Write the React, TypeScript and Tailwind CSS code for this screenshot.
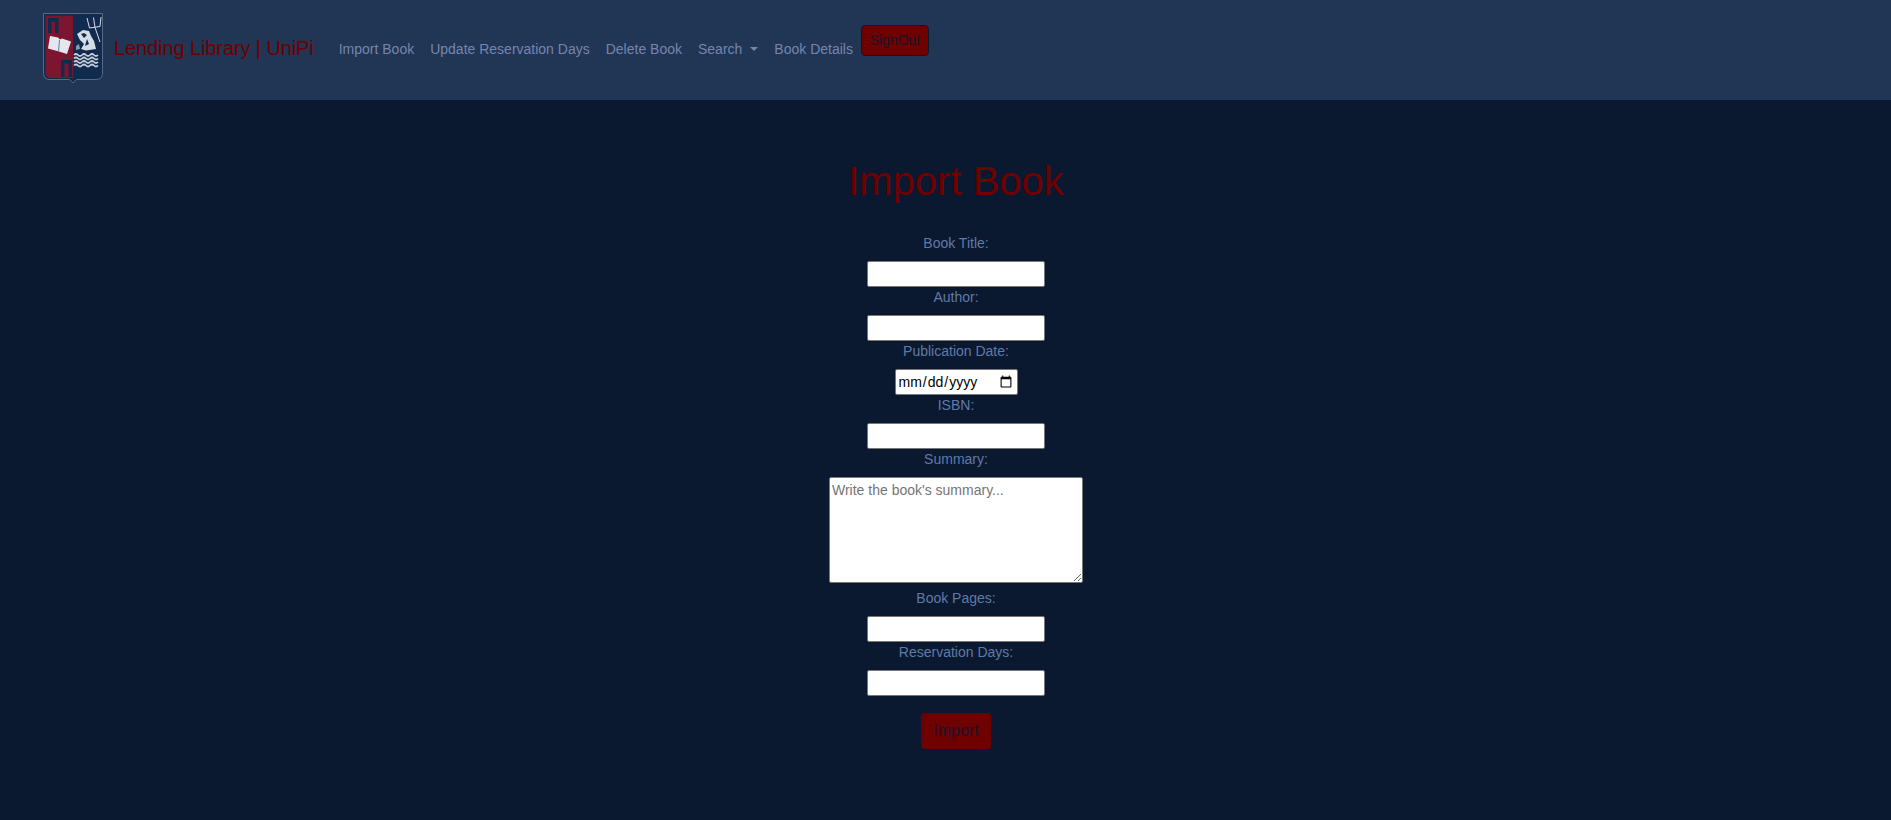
import type { ReactNode } from 'react';

const font = "font-['Liberation_Sans',Arial,sans-serif]";

function Logo() {
  return (
    <svg viewBox="0 0 60 70" className="mb-[4px] h-[70px] w-[60px] shrink-0">
      {/* shield */}
      <path d="M0.5 0.5H59.5V60Q59.5 66.5 53 66.5H33.5L30 70L26.5 66.5H7Q0.5 66.5 0.5 60Z" fill="#112b4e" stroke="#56698a" strokeWidth="1" />
      <path d="M2.5 2.5H30V65H8Q2.5 65 2.5 59Z" fill="#7d1530" />
      {/* pi letters */}
      <path d="M5 5H15.5V20H12V8.5H8.5V20H5Z" fill="#112b4e" />
      <path d="M18 47H29V64H25.5V50.5H21.5V64H18Z" fill="#112b4e" />
      {/* book */}
      <path d="M7 23L15 24.5L17 26.5L19 25.5L28 28.5L24 41L16 38.5L5 35.5Z" fill="#e4e8ee" />
      <path d="M16.5 27L15.5 38.5" stroke="#6a7a92" strokeWidth="1" />
      {/* trident */}
      <path d="M44 5L46.5 15L57 13.5L58 4M50.5 4.5L52 14.5L57 29" fill="none" stroke="#d5dce6" strokeWidth="1" />
      {/* head */}
      <path d="M34 21L40 17L46 18L48 23L51 28L53 36L43 37.5L38 36L41 31L37 27Z" fill="#d5dce6" />
      <path d="M38 21L41 20L44 22L41 25ZM44 26L46 31L42 33Z" fill="#112b4e" />
      <path d="M33 33L36 31L37 36L33 37Z" fill="#8a98ad" />
      {/* waves */}
      <path d="M31 42q2-2 4 0t4 0t4 0t4 0t4 0t4 0M31 45.5q2-2 4 0t4 0t4 0t4 0t4 0t4 0M31 49q2-2 4 0t4 0t4 0t4 0t4 0t4 0M31 52.5q2-2 4 0t4 0t4 0t4 0t4 0t4 0" fill="none" stroke="#c4cdd9" strokeWidth="1.7" />
    </svg>
  );
}

function NavLink({ children }: { children: ReactNode }) {
  return (
    <a href="#" className="mb-[2px] px-2 text-[14px] leading-[21px] text-[#7585ad]">
      {children}
    </a>
  );
}

function Field({ label, children }: { label: string; children: ReactNode }) {
  return (
    <div className="flex flex-col items-center">
      <label className="mb-[7px] text-[14px] leading-[21px] text-[#607aa8]">{label}</label>
      {children}
    </div>
  );
}

const inputClass = 'block h-[26px] w-[178px] rounded-[2px] border border-[#767676] bg-white px-[2px] text-[14px] text-black';

export default function App() {
  return (
    <div className={`${font} flex min-h-[820px] flex-col bg-[#0a1930]`}>
      <nav className="flex h-[100px] items-center bg-[#213555] pl-[43px]">
        <Logo />
        <a href="#" className="mb-[4px] ml-[11px] mr-[17px] text-[20px] leading-[30px] tracking-[-0.1px] text-[#6f0000]">
          Lending Library | UniPi
        </a>
        <NavLink>Import Book</NavLink>
        <NavLink>Update Reservation Days</NavLink>
        <NavLink>Delete Book</NavLink>
        <a href="#" className="mb-[2px] flex items-center px-2 text-[14px] leading-[21px] text-[#7585ad]">
          Search
          <span className="ml-[8px] h-0 w-0 border-x-[4px] border-t-[4px] border-x-transparent border-t-[#7585ad]" />
        </a>
        <NavLink>Book Details</NavLink>
        <button className="mb-[19px] h-[31px] w-[68px] rounded-[4px] border border-[#0a1930] bg-[#6f0000] text-[14px] text-[#1a1530]">
          SignOut
        </button>
      </nav>

      <main className="flex flex-col items-center pl-[21px] pt-[57px]">
        <h1 className="mb-[28px] text-[40px] leading-[48px] font-normal text-[#6f0000]">Import Book</h1>
        <form className="flex flex-col items-center">
          <Field label="Book Title:">
            <input type="text" className={inputClass} />
          </Field>
          <Field label="Author:">
            <input type="text" className={inputClass} />
          </Field>
          <Field label="Publication Date:">
            <input type="date" className="block h-[26px] w-[123px] rounded-[2px] border border-[#767676] bg-white px-[2px] text-[14px] text-black" />
          </Field>
          <Field label="ISBN:">
            <input type="text" className={inputClass} />
          </Field>
          <Field label="Summary:">
            <textarea
              placeholder="Write the book's summary..."
              className="mb-[5px] block h-[106px] w-[254px] rounded-[2px] border border-[#767676] bg-white p-[2px] text-[14px] leading-[21px] text-black placeholder:text-[#757575]"
            />
          </Field>
          <Field label="Book Pages:">
            <input type="text" className={inputClass} />
          </Field>
          <Field label="Reservation Days:">
            <input type="text" className={inputClass} />
          </Field>
          <button type="submit" className="mt-[17px] h-[36px] w-[70px] rounded-[4px] bg-[#6f0000] text-[16px] text-[#1a1530]">
            Import
          </button>
        </form>
      </main>
    </div>
  );
}
